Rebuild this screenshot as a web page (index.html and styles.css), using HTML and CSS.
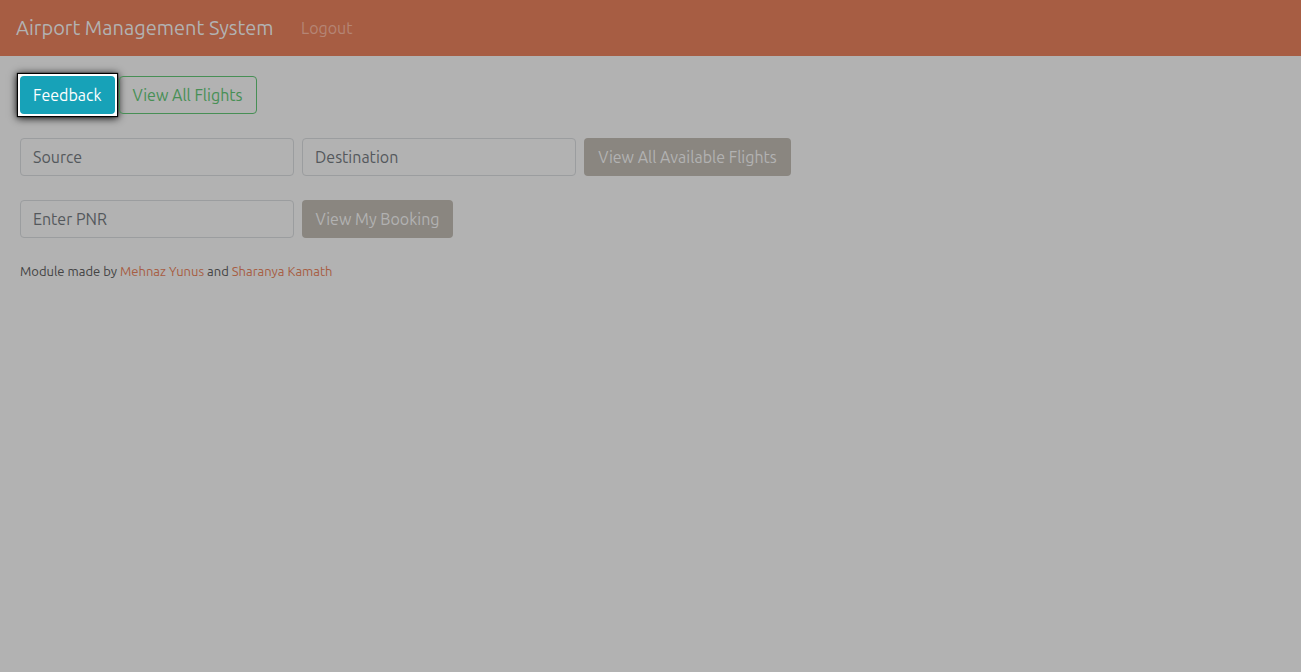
FILE: index.html
```html
<!DOCTYPE html>
<html lang="en">
<head>
  <meta charset="utf-8">
  <meta name="viewport" content="width=device-width, initial-scale=1">
  <title>Airport Management System</title>
  <link rel="stylesheet" href="styles.css">
</head>
<body>
  <nav class="navbar">
    <a class="navbar-brand" href="#">Airport Management System</a>
    <a class="nav-link" href="#">Logout</a>
  </nav>
  <main class="content">
    <div class="actions">
      <button type="button" class="btn btn-info">Feedback</button>
      <button type="button" class="btn btn-outline">View All Flights</button>
    </div>
    <form class="form-row">
      <input class="field" type="text" placeholder="Source" aria-label="Source">
      <input class="field" type="text" placeholder="Destination" aria-label="Destination">
      <button type="button" class="btn btn-muted btn-search">View All Available Flights</button>
    </form>
    <form class="form-row">
      <input class="field" type="text" placeholder="Enter PNR" aria-label="Enter PNR">
      <button type="button" class="btn btn-muted">View My Booking</button>
    </form>
    <footer class="credits">Module made by <a href="#">Mehnaz Yunus</a> and <a href="#">Sharanya Kamath</a></footer>
  </main>
</body>
</html>
```

FILE: styles.css
```css
* {
  box-sizing: border-box;
}

body {
  margin: 0;
  background: #b2b2b2;
  color: #434343;
  font-family: Ubuntu, "Noto Sans", sans-serif;
  font-size: 16px;
  line-height: 24px;
}

a {
  color: #a75d43;
  text-decoration: none;
}

.navbar {
  display: flex;
  align-items: center;
  gap: 24px;
  min-height: 56px;
  padding: 8px 16px;
  background: #a75d43;
}

.navbar-brand {
  min-width: 261px;
  color: #b2b2b2;
  font-size: 20px;
  white-space: nowrap;
}

.nav-link {
  color: #b58575;
}

.content {
  display: flex;
  flex-direction: column;
  gap: 24px;
  padding: 20px;
}

.actions {
  display: flex;
  gap: 4px;
}

.form-row {
  display: flex;
  gap: 8px;
}

.btn,
.field {
  height: 38px;
  padding: 6px 12px;
  border: 1px solid transparent;
  border-radius: 4px;
  font: inherit;
}

.btn {
  white-space: nowrap;
  cursor: pointer;
}

.btn-info {
  position: relative;
  background: #17a2b8;
  color: #fff;
}

.btn-info::before {
  content: "";
  position: absolute;
  z-index: -1;
  inset: -3px;
  background: #fff;
  box-shadow: 0 0 0 1px #000, 0 0 1px 1px #000, 0 1px 8px 1px #000;
}

.btn-outline {
  min-width: 138px;
  border-color: #478f55;
  background: transparent;
  color: #478f55;
}

.btn-muted {
  min-width: 151px;
  background: #8a8680;
  color: #b2b2b2;
}

.btn-search {
  min-width: 207px;
}

.field {
  width: 274px;
  background: #b2b2b2;
  border-color: #9b9d9f;
  color: #515558;
}

.field::placeholder {
  color: #54585c;
  opacity: 1;
}

.credits {
  font-size: 13px;
  line-height: 18px;
}
```
